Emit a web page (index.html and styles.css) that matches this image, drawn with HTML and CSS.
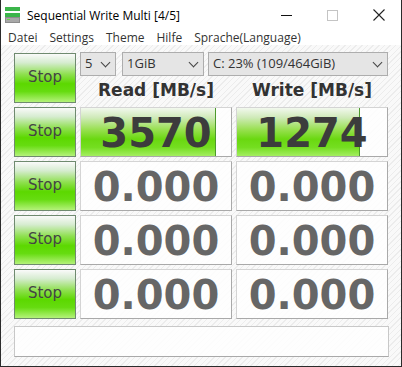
FILE: index.html
```html
<!DOCTYPE html>
<html lang="de">
<head>
    <meta charset="UTF-8">
    <title>Sequential Write Multi [4/5]</title>
    <link rel="stylesheet" href="styles.css">
</head>
<body>
    <div class="window">
        <div class="titlebar">
            <svg class="app-icon" width="15" height="16" viewBox="0 0 15 16">
                <rect x="0" y="0" width="15" height="4" fill="#3bb54a"/>
                <rect x="0" y="6" width="15" height="4" fill="#3bb54a"/>
                <rect x="0" y="10" width="15" height="6" fill="#8c8c8c"/>
                <rect x="1" y="11" width="13" height="4" fill="#a8a8a8"/>
                <rect x="2" y="12" width="3" height="1" fill="#5ddc40"/>
            </svg>
            <span class="title">Sequential Write Multi [4/5]</span>
            <div class="controls">
                <span class="ctl min"></span>
                <span class="ctl max"></span>
                <svg class="ctl close" width="12" height="12" viewBox="0 0 12 12">
                    <path d="M0.5 0.5 L11.5 11.5 M11.5 0.5 L0.5 11.5" stroke="#222" stroke-width="1.1"/>
                </svg>
            </div>
        </div>

        <div class="menubar">
            <span>Datei</span>
            <span>Settings</span>
            <span>Theme</span>
            <span>Hilfe</span>
            <span>Sprache(Language)</span>
        </div>

        <div class="content">
            <div class="grid">
                <button class="stop">Stop</button>
                <div class="head">
                    <div class="selects">
                        <div class="select s-count">5<span class="arrow"></span></div>
                        <div class="select s-size">1GiB<span class="arrow"></span></div>
                        <div class="select s-drive">C: 23% (109/464GiB)<span class="arrow"></span></div>
                    </div>
                    <div class="labels">
                        <div>Read [MB/s]</div>
                        <div>Write [MB/s]</div>
                    </div>
                </div>

                <button class="stop">Stop</button>
                <div class="value active"><div class="bar" style="width: 89%"></div><span>3570</span></div>
                <div class="value active"><div class="bar" style="width: 81%"></div><span>1274</span></div>

                <button class="stop">Stop</button>
                <div class="value"><span>0.000</span></div>
                <div class="value"><span>0.000</span></div>

                <button class="stop">Stop</button>
                <div class="value"><span>0.000</span></div>
                <div class="value"><span>0.000</span></div>

                <button class="stop">Stop</button>
                <div class="value"><span>0.000</span></div>
                <div class="value"><span>0.000</span></div>
            </div>
            <div class="statusbar"></div>
        </div>
    </div>
</body>
</html>
```

FILE: styles.css
```css
body {
    margin: 0;
    padding: 0;
    font-family: "Open Sans", "Noto Sans", sans-serif;
}

.window {
    width: 400px;
    height: 366px;
    border: 1px solid #2b2b2b;
    border-top: none;
    background: #fff;
    display: flex;
    flex-direction: column;
}

/* Title bar */
.titlebar {
    height: 30px;
    display: flex;
    align-items: center;
    background: #fff;
}

.app-icon {
    margin-left: 4px;
    margin-right: 7px;
}

.title {
    font-size: 12px;
    color: #000;
    flex: 1;
}

.controls {
    display: flex;
    align-items: center;
}

.ctl {
    display: block;
}

.ctl.min {
    width: 11px;
    height: 1px;
    background: #111;
    margin-right: 35px;
}

.ctl.max {
    width: 9px;
    height: 9px;
    border: 1px solid #c4c4c4;
    margin-right: 35px;
}

.ctl.close {
    margin-right: 16px;
}

/* Menu */
.menubar {
    height: 15px;
    display: flex;
    align-items: center;
    font-size: 12px;
    color: #333;
    padding-left: 7px;
}

.menubar span {
    margin-right: 12px;
}

/* Content */
.content {
    flex: 1;
    padding: 8px 12px 0 13px;
    background-color: #f7f7f7;
    background-image: repeating-linear-gradient(135deg, #f9f9f9 0px, #f9f9f9 3px, #ececec 3px, #ececec 4px);
}

.grid {
    display: grid;
    grid-template-columns: 62px 152px 152px;
    grid-auto-rows: 50px;
    column-gap: 4px;
    row-gap: 4px;
}

.stop {
    margin: 0;
    padding: 0 0 2px;
    border: 1px solid #6f8a6f;
    background: linear-gradient(to bottom, #fafafa 0%, #d6ecd0 18%, #8fe050 42%, #5cd800 62%, #66dc10 78%, #b4f27a 100%);
    font-family: "Comic Sans MS", "DejaVu Sans", sans-serif;
    font-size: 15px;
    color: #444;
}

.head {
    grid-column: 2 / 4;
    display: flex;
    flex-direction: column;
    margin-top: -1px;
}

.selects {
    display: flex;
    height: 24px;
}

.select {
    position: relative;
    box-sizing: border-box;
    height: 24px;
    border: 1px solid #adadad;
    background: #e5e5e5;
    font-size: 13px;
    color: #333;
    padding-left: 4px;
    line-height: 21px;
}

.s-count {
    width: 36px;
}

.s-size {
    width: 82px;
    margin-left: 6px;
}

.s-drive {
    width: 180px;
    margin-left: 4px;
}

.arrow {
    position: absolute;
    right: 6px;
    top: 6px;
    width: 6px;
    height: 6px;
    border-right: 1.3px solid #444;
    border-bottom: 1.3px solid #444;
    transform: rotate(45deg);
}

.labels {
    display: grid;
    grid-template-columns: 152px 152px;
    column-gap: 4px;
    height: 27px;
    align-items: center;
    font-family: "DejaVu Sans", sans-serif;
    font-weight: bold;
    font-size: 17px;
    color: #333;
    text-align: center;
}

.value {
    position: relative;
    box-sizing: border-box;
    border: 1px solid #d4d4d4;
    border-right-color: #a9a9a9;
    border-bottom-color: #a9a9a9;
    background: rgba(255, 255, 255, 0.85);
    display: flex;
    align-items: center;
    justify-content: center;
    font-family: "DejaVu Sans", sans-serif;
    font-weight: bold;
    font-size: 40px;
    color: #666;
    overflow: hidden;
}

.value span {
    position: relative;
    margin-top: 1px;
}

.value.active {
    color: #3c3c3c;
}

.bar {
    position: absolute;
    left: 0;
    top: 0;
    bottom: 0;
    border-right: 1px solid #4c9a2c;
    background: linear-gradient(to bottom, #f2f8ee 0%, #cfeab8 20%, #98e050 45%, #6ad810 65%, #74de20 82%, #a4ee60 100%);
}

.statusbar {
    box-sizing: border-box;
    height: 31px;
    margin-top: 7px;
    border: 1px solid #c8c8c8;
    border-bottom-color: #a9a9a9;
    background: rgba(255, 255, 255, 0.85);
}
```
